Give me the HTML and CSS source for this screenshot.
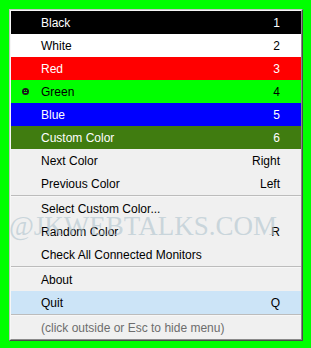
FILE: index.html
```html
<!DOCTYPE html>
<html lang="en">
<head>
    <meta charset="UTF-8">
    <title>Color Menu</title>
    <link rel="stylesheet" href="styles.css">
</head>
<body>

    <div class="menu">
        <div class="menu-inner">
            <div class="item black"><span class="mark"></span><span class="label">Black</span><span class="key">1</span></div>
            <div class="item white"><span class="mark"></span><span class="label">White</span><span class="key">2</span></div>
            <div class="item red"><span class="mark"></span><span class="label">Red</span><span class="key">3</span></div>
            <div class="item green">
                <span class="mark">
                    <svg width="7" height="7" viewBox="0 0 7 7">
                        <circle cx="3.5" cy="3.5" r="3.5" fill="#1a1a1a"/>
                        <rect x="2" y="2" width="1" height="1" fill="#00ff00"/>
                        <rect x="4" y="2" width="1" height="1" fill="#00ff00"/>
                        <rect x="2" y="4" width="3" height="1" fill="#00ff00"/>
                    </svg>
                </span>
                <span class="label">Green</span><span class="key">4</span>
            </div>
            <div class="item blue"><span class="mark"></span><span class="label">Blue</span><span class="key">5</span></div>
            <div class="item custom"><span class="mark"></span><span class="label">Custom Color</span><span class="key">6</span></div>
            <div class="item"><span class="mark"></span><span class="label">Next Color</span><span class="key">Right</span></div>
            <div class="item"><span class="mark"></span><span class="label">Previous Color</span><span class="key">Left</span></div>
            <div class="sep"></div>
            <div class="item"><span class="mark"></span><span class="label">Select Custom Color...</span><span class="key"></span></div>
            <div class="item"><span class="mark"></span><span class="label">Random Color</span><span class="key">R</span></div>
            <div class="item"><span class="mark"></span><span class="label">Check All Connected Monitors</span><span class="key"></span></div>
            <div class="sep"></div>
            <div class="item"><span class="mark"></span><span class="label">About</span><span class="key"></span></div>
            <div class="item active"><span class="mark"></span><span class="label">Quit</span><span class="key">Q</span></div>
            <div class="sep"></div>
            <div class="item hint"><span class="mark"></span><span class="label">(click outside or Esc to hide menu)</span><span class="key"></span></div>
        </div>
    </div>

    <div class="watermark">@JKWEBTALKS.COM</div>

</body>
</html>
```

FILE: styles.css
```css
body {
    margin: 0;
    padding: 9px;
    background-color: #00ff00;
    font-family: "Liberation Sans", Arial, sans-serif;
    font-size: 12px;
}

.menu {
    width: 292px;
    border: 1px solid;
    border-color: #c4c4c4 #4a4a4a #4a4a4a #c4c4c4;
}

.menu-inner {
    border: 1px solid;
    border-color: #f6f6f6 #8a8a8a #8a8a8a #f6f6f6;
    background-color: #f0f0f0;
}

.item {
    display: grid;
    grid-template-columns: 30px 1fr auto;
    align-items: center;
    height: 23px;
    padding-right: 21px;
    color: #000;
}

.mark {
    display: flex;
    padding-left: 11px;
}

.mark svg {
    display: block;
}

.black { background-color: #000; color: #fff; }
.white { background-color: #fff; }
.red { background-color: #ff0000; color: #fff; }
.green { background-color: #00ff00; }
.blue { background-color: #0000ff; color: #fff; }
.custom { background-color: #407c10; color: #fff; }

.active { background-color: #cce4f7; }

.hint { color: #6d6d6d; }

.sep {
    border-top: 1px solid #bcbcbc;
    border-bottom: 1px solid #f7f7f7;
}

.watermark {
    position: absolute;
    left: 9px;
    top: 211px;
    font-family: "Liberation Serif", serif;
    font-size: 27px;
    color: rgba(175, 195, 205, 0.6);
    pointer-events: none;
}
```
